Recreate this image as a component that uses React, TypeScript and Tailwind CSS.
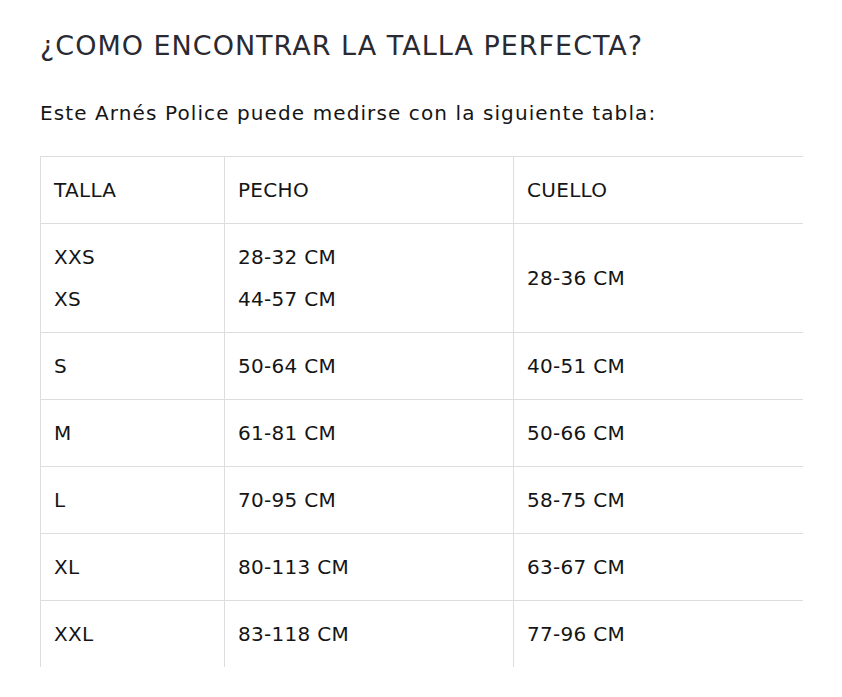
const rows: { talla: string[]; pecho: string[]; cuello: string }[] = [
  { talla: ['XXS', 'XS'], pecho: ['28-32 CM', '44-57 CM'], cuello: '28-36 CM' },
  { talla: ['S'], pecho: ['50-64 CM'], cuello: '40-51 CM' },
  { talla: ['M'], pecho: ['61-81 CM'], cuello: '50-66 CM' },
  { talla: ['L'], pecho: ['70-95 CM'], cuello: '58-75 CM' },
  { talla: ['XL'], pecho: ['80-113 CM'], cuello: '63-67 CM' },
  { talla: ['XXL'], pecho: ['83-118 CM'], cuello: '77-96 CM' },
];

function Cell({ lines, tall }: { lines: string[]; tall: boolean }) {
  return (
    <div className={`border-t border-l border-[#dddddd] px-[13px] flex flex-col justify-center ${tall ? 'h-[109px]' : 'h-[67px]'}`}>
      {lines.map((l) => (
        <span key={l} className="leading-[42px]">{l}</span>
      ))}
    </div>
  );
}

export default function App() {
  return (
    <div className="bg-white min-h-[697px] px-10 pt-[26px] text-[#151515]" style={{ fontFamily: '"DejaVu Sans", "Liberation Sans", sans-serif' }}>
      <h2 className="text-[27px] leading-[40px] text-[#2a2a33] tracking-[1px]">¿COMO ENCONTRAR LA TALLA PERFECTA?</h2>
      <p className="mt-[32px] text-[20px] leading-[30px] tracking-[1.1px]">Este Arnés Police puede medirse con la siguiente tabla:</p>

      <div className="mt-[28px] w-[763px] grid grid-cols-[184px_289px_290px] text-[20px] tracking-[0.3px]">
        <Cell lines={['TALLA']} tall={false} />
        <Cell lines={['PECHO']} tall={false} />
        <Cell lines={['CUELLO']} tall={false} />
        {rows.map((r) => {
          const tall = r.talla.length > 1;
          return (
            <div key={r.talla[0]} className="contents">
              <Cell lines={r.talla} tall={tall} />
              <Cell lines={r.pecho} tall={tall} />
              <Cell lines={[r.cuello]} tall={tall} />
            </div>
          );
        })}
      </div>
    </div>
  );
}
